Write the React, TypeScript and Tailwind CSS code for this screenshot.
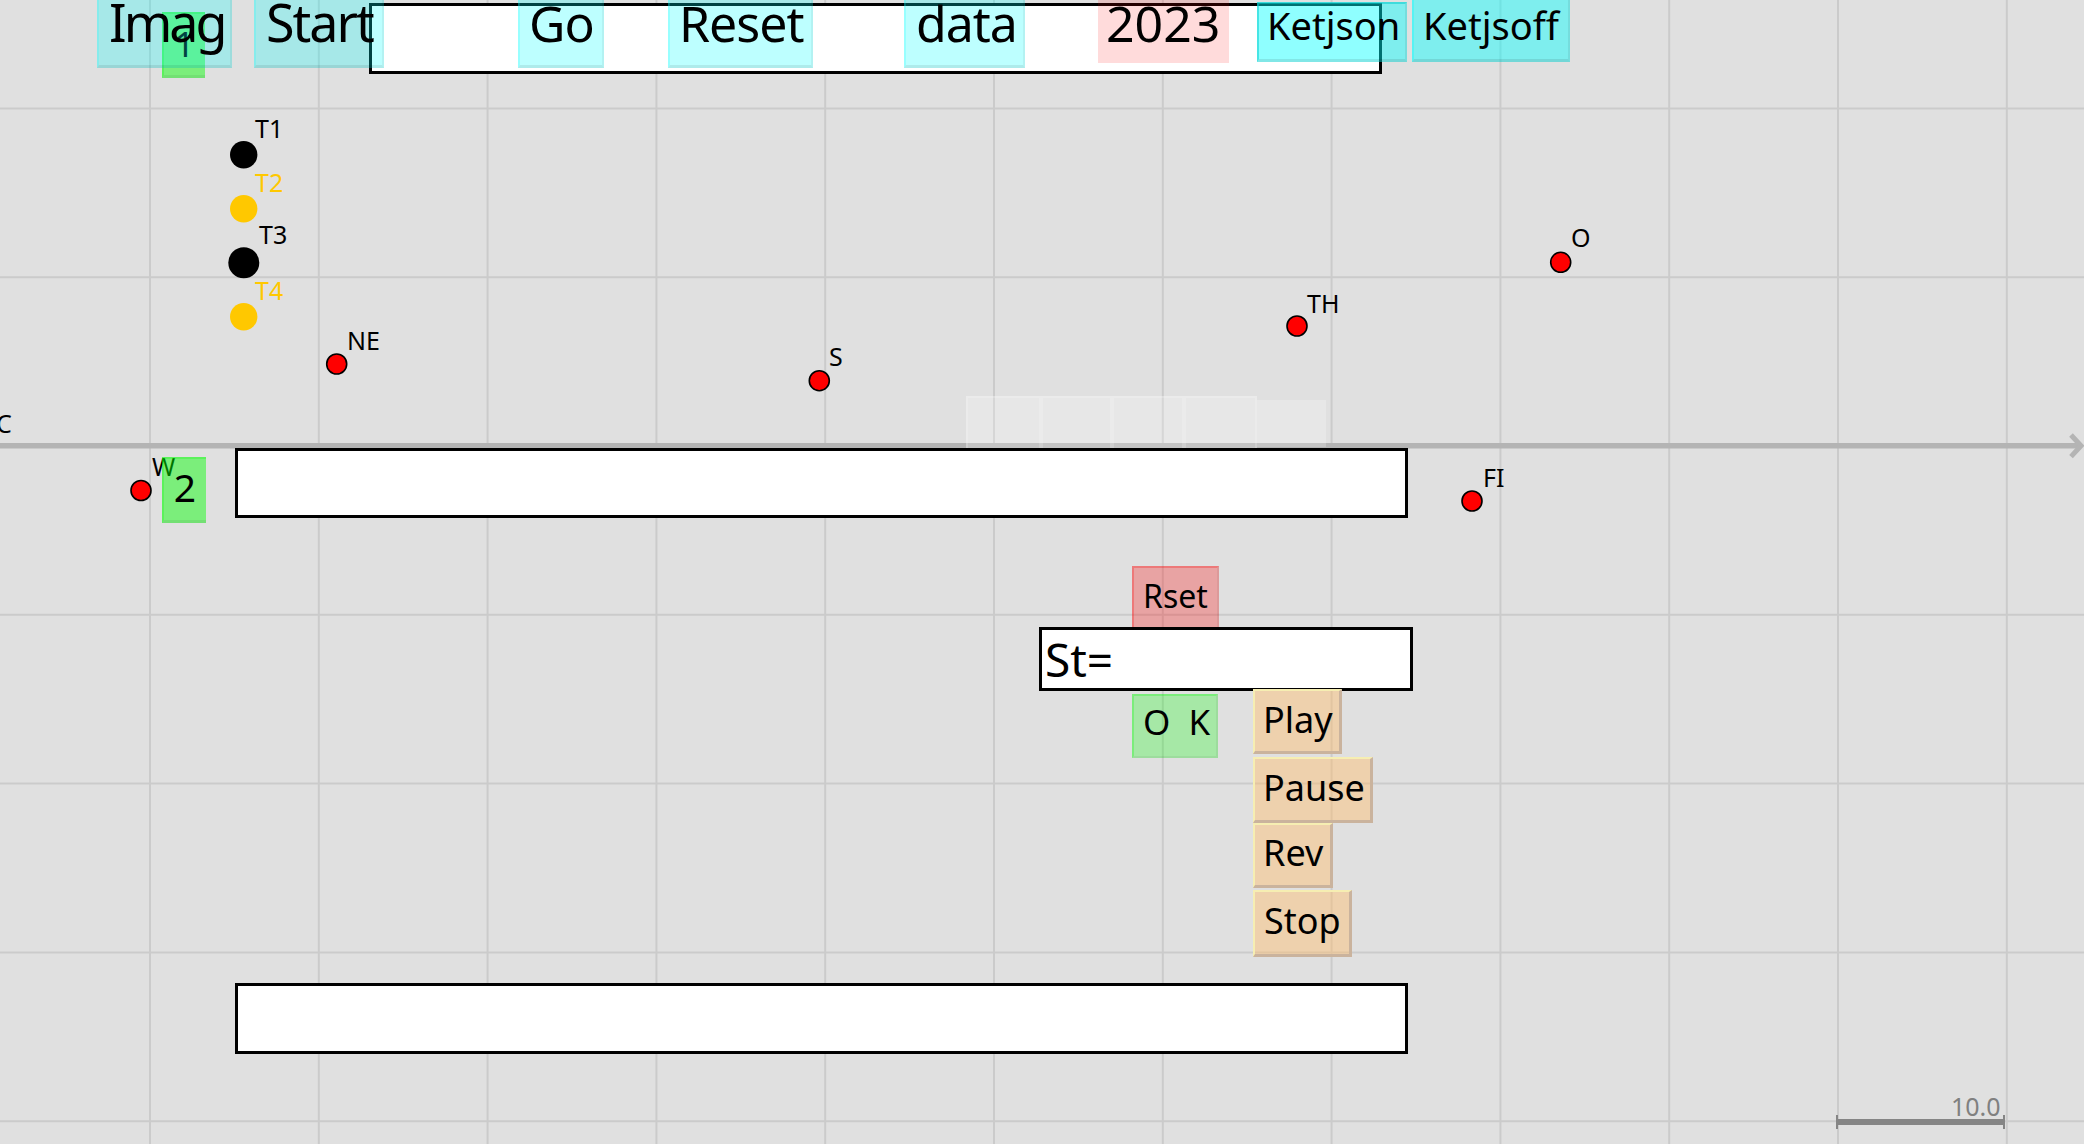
import React from 'react';

const GRID_X = Array.from({ length: 12 }, (_, k) => 150 + 168.8 * k);
const GRID_Y = [-2, -1, 1, 2, 3, 4].map((k) => 446 + 168.8 * k);

const points = [
  { x: 243.7, y: 154.7, r: 13.7, fill: '#000000', stroke: 'none' },
  { x: 243.7, y: 208.8, r: 13.7, fill: '#ffc800', stroke: 'none' },
  { x: 243.8, y: 262.8, r: 15.5, fill: '#000000', stroke: 'none' },
  { x: 243.7, y: 316.7, r: 13.7, fill: '#ffc800', stroke: 'none' },
  { x: 336.7, y: 364, r: 10, fill: '#ff0000', stroke: '#000000' },
  { x: 819.3, y: 380.7, r: 10, fill: '#ff0000', stroke: '#000000' },
  { x: 1297, y: 326, r: 10, fill: '#ff0000', stroke: '#000000' },
  { x: 1560.7, y: 262.3, r: 10, fill: '#ff0000', stroke: '#000000' },
  { x: 1472, y: 501, r: 10, fill: '#ff0000', stroke: '#000000' },
  { x: 141, y: 490.5, r: 10, fill: '#ff0000', stroke: '#000000' },
];

// point labels, top = baseline - 22
const labels = [
  { text: 'T1', cls: 'left-[255px] top-[116px] text-black' },
  { text: 'T2', cls: 'left-[255px] top-[170px] text-[#ffc800]' },
  { text: 'T3', cls: 'left-[259px] top-[222px] text-black' },
  { text: 'T4', cls: 'left-[255px] top-[278px] text-[#ffc800]' },
  { text: 'NE', cls: 'left-[347px] top-[328px] text-black' },
  { text: 'S', cls: 'left-[829px] top-[344px] text-black' },
  { text: 'TH', cls: 'left-[1307px] top-[291px] text-black' },
  { text: 'O', cls: 'left-[1571px] top-[225px] text-black' },
  { text: 'FI', cls: 'left-[1483px] top-[465px] text-black' },
  { text: 'W', cls: 'left-[152px] top-[454px] text-black' },
  { text: 'C', cls: 'left-[-4px] top-[411px] text-black' },
];

const cyanBevel = 'border-l-2 border-r-2 border-b-[3px] border-l-[#00ffff30] border-r-[#0000000d] border-b-[#00000014]';
const playBevel =
  'border-l-2 border-t-2 border-r-[3px] border-b-[3px] border-l-[#f6eeb2] border-t-[#f6eeb2] border-r-[#cab39d] border-b-[#cab39d] bg-[#ffbe6e73]';

function Btn({ box, text, label }: { box: string; text: string; label: string }) {
  return (
    <div className={`absolute flex ${box}`}>
      <span className={`block leading-none whitespace-pre text-black ${text}`}>{label}</span>
    </div>
  );
}

export default function App() {
  return (
    <div className="relative w-[2084px] h-[1144px] overflow-hidden bg-[#e0e0e0] font-['Noto_Sans',sans-serif]">
      {/* grid, axis, points */}
      <svg className="absolute inset-0" width={2084} height={1144}>
        {GRID_X.map((x) => (
          <line key={`vx${x}`} x1={x} y1={0} x2={x} y2={1144} stroke="#cbcbcb" strokeWidth={2} />
        ))}
        {GRID_Y.map((y) => (
          <line key={`hy${y}`} x1={0} y1={y} x2={2084} y2={y} stroke="#cbcbcb" strokeWidth={2} />
        ))}
        <line x1={0} y1={445.8} x2={2079} y2={445.8} stroke="#b4b4b4" strokeWidth={5.5} />
        <polyline points="2071,435 2081,445.8 2071,456.6" fill="none" stroke="#b4b4b4" strokeWidth={5} />

        <line x1={1836} y1={1122} x2={2005} y2={1122} stroke="#858585" strokeWidth={6} />
        <line x1={1837} y1={1115} x2={1837} y2={1129} stroke="#858585" strokeWidth={2} />
        <line x1={2004} y1={1115} x2={2004} y2={1129} stroke="#858585" strokeWidth={2} />

        {points.map((p, i) => (
          <circle key={i} cx={p.x} cy={p.y} r={p.r} fill={p.fill} stroke={p.stroke} strokeWidth={1.6} />
        ))}
      </svg>

      <span className="absolute left-[1951px] top-[1094px] text-[25px] leading-none text-[#808080]">10.0</span>

      {labels.map((l) => (
        <span key={l.text} className={`absolute text-[25px] leading-none ${l.cls}`}>
          {l.text}
        </span>
      ))}

      {/* translucent cells above the axis */}
      <div className="absolute left-[966px] top-[396px] flex h-[54px]">
        <div className="w-[75px] h-full bg-[#ffffff38] border-2 border-[#ffffff30]" />
        <div className="w-[71px] h-full bg-[#ffffff38] border-2 border-[#ffffff30]" />
        <div className="w-[72px] h-full bg-[#ffffff38] border-2 border-[#ffffff30]" />
        <div className="w-[73px] h-full bg-[#ffffff38] border-2 border-[#ffffff30]" />
        <div className="w-[69px] h-[47px] mt-[4px] bg-[#ffffff38]" />
      </div>

      {/* text fields */}
      <div className="absolute left-[369px] top-[3px] w-[1013px] h-[71px] bg-white border-[3px] border-black" />
      <div className="absolute left-[235px] top-[448px] w-[1173px] h-[70px] bg-white border-[3px] border-black" />
      <div className="absolute left-[235px] top-[983px] w-[1173px] h-[71px] bg-white border-[3px] border-black" />

      {/* top row */}
      <Btn
        box="left-[162px] top-[12px] w-[43px] h-[66px] justify-center pt-[12px] bg-[#00ff0073] border-l-2 border-t-2 border-b-[3px] border-l-[#00ff0040] border-t-[#00ff0040] border-b-[#0000000f]"
        text="text-[35px]"
        label="1"
      />
      <Btn box={`left-[97px] top-0 w-[135px] h-[68px] pl-[10px] bg-[#00ffff42] ${cyanBevel}`} text="text-[52px] mt-[-4px] tracking-[-3px]" label="Imag" />
      <Btn box={`left-[254px] top-0 w-[130px] h-[68px] pl-[10px] bg-[#00ffff42] ${cyanBevel}`} text="text-[52px] mt-[-4px] tracking-[-2px]" label="Start" />
      <Btn box={`left-[518px] top-0 w-[86px] h-[68px] pl-[9px] bg-[#00ffff42] ${cyanBevel}`} text="text-[50px] mt-[-2px] tracking-[-1px]" label="Go" />
      <Btn box={`left-[668px] top-0 w-[145px] h-[68px] pl-[9px] bg-[#00ffff42] ${cyanBevel}`} text="text-[50px] mt-[-2px] tracking-[-1px]" label="Reset" />
      <Btn box={`left-[904px] top-0 w-[121px] h-[68px] pl-[10px] bg-[#00ffff42] ${cyanBevel}`} text="text-[50px] mt-[-2px] tracking-[-1px]" label="data" />
      <Btn box="left-[1098px] top-0 w-[131px] h-[63px] pl-[8px] bg-[#ff000024]" text="text-[50px] mt-[-2px]" label="2023" />
      <Btn
        box="left-[1257px] top-[2px] w-[150px] h-[60px] pl-[8px] pt-[2px] bg-[#00ffff70] border-2 border-b-[3px] border-l-[#00cccc80] border-t-[#00cccc80] border-r-[#00000012] border-b-[#00000018]"
        text="text-[38px]"
        label="Ketjson"
      />
      <Btn
        box="left-[1412px] top-0 w-[158px] h-[62px] pl-[9px] pt-[6px] bg-[#00ffff70] border-l-2 border-r-2 border-b-[3px] border-l-[#00ffff50] border-r-[#00000012] border-b-[#00000018]"
        text="text-[38px]"
        label="Ketjsoff"
      />

      {/* green 2 */}
      <Btn
        box="left-[162px] top-[457px] w-[44px] h-[66px] justify-center pt-[8px] bg-[#00ff0073] border-l-2 border-t-2 border-b-[3px] border-l-[#00ff0040] border-t-[#00ff0040] border-b-[#0000000f]"
        text="text-[39px]"
        label="2"
      />

      {/* control panel */}
      <Btn
        box="left-[1132px] top-[566px] w-[87px] h-[63px] pl-[9px] pt-[12px] bg-[#ff000045] border-l-2 border-t-2 border-r-2 border-b-2 border-l-[#ff000040] border-t-[#ff000040] border-r-[#0000000d] border-b-[#0000000d]"
        text="text-[32px]"
        label="Rset"
      />
      <Btn
        box="left-[1039px] top-[627px] w-[374px] h-[64px] pl-[3px] pt-[6px] bg-white border-[3px] border-black"
        text="text-[46px]"
        label="St="
      />
      <Btn
        box="left-[1132px] top-[694px] w-[86px] h-[64px] pl-[9px] pt-[8px] bg-[#00ff0042] border-l-2 border-t-2 border-r-2 border-b-2 border-l-[#00ff0040] border-t-[#00ff0040] border-r-[#0000000d] border-b-[#0000000d]"
        text="text-[35px]"
        label="O  K"
      />
      <Btn box={`left-[1253px] top-[689px] w-[89px] h-[65px] pl-[8px] pt-[11px] ${playBevel}`} text="text-[36px]" label="Play" />
      <Btn box={`left-[1253px] top-[757px] w-[120px] h-[66px] pl-[8px] pt-[11px] ${playBevel}`} text="text-[36px]" label="Pause" />
      <Btn box={`left-[1253px] top-[823px] w-[80px] h-[65px] pl-[8px] pt-[10px] ${playBevel}`} text="text-[36px]" label="Rev" />
      <Btn box={`left-[1253px] top-[890px] w-[99px] h-[67px] pl-[9px] pt-[11px] ${playBevel}`} text="text-[36px]" label="Stop" />
    </div>
  );
}
